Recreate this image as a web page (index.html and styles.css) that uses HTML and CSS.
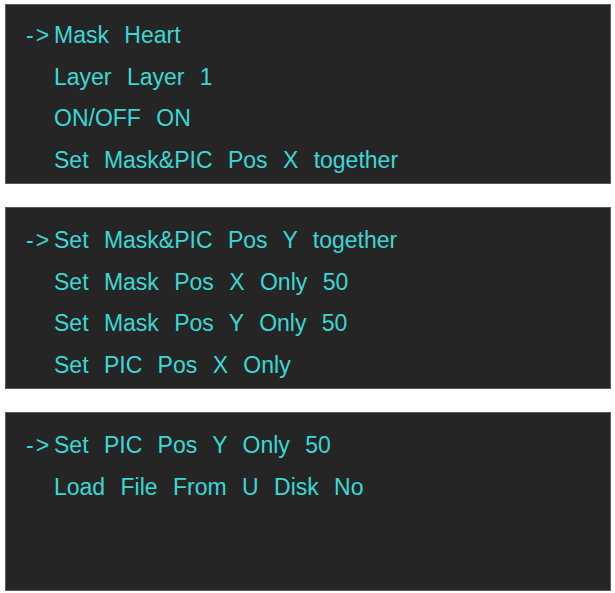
FILE: index.html
```html
<!DOCTYPE html>
<html lang="en">
<head>
  <meta charset="UTF-8">
  <title>Mask Menu</title>
  <link rel="stylesheet" href="styles.css">
</head>
<body>

  <!-- Menu page 1 -->
  <div class="screen">
    <p class="line"><span class="cursor">-&gt;</span>Mask  Heart</p>
    <p class="line indent">Layer  Layer  1</p>
    <p class="line indent">ON/OFF  ON</p>
    <p class="line indent">Set  Mask&amp;PIC  Pos  X  together</p>
  </div>

  <!-- Menu page 2 -->
  <div class="screen tall">
    <p class="line"><span class="cursor">-&gt;</span>Set  Mask&amp;PIC  Pos  Y  together</p>
    <p class="line indent">Set  Mask  Pos  X  Only  50</p>
    <p class="line indent">Set  Mask  Pos  Y  Only  50</p>
    <p class="line indent">Set  PIC  Pos  X  Only</p>
  </div>

  <!-- Menu page 3 -->
  <div class="screen last">
    <p class="line"><span class="cursor">-&gt;</span>Set  PIC  Pos  Y  Only  50</p>
    <p class="line indent">Load  File  From  U  Disk  No</p>
  </div>

</body>
</html>
```

FILE: styles.css
```css
body {
  margin: 0;
  padding: 4px 4px 0 5px;
  background-color: #fff;
  font-family: "Liberation Sans", Arial, sans-serif;
}

.screen {
  box-sizing: border-box;
  width: 606px;
  height: 180px;
  margin-bottom: 23px;
  padding: 10px 0 0 19px;
  background-color: #252525;
  border: 1px solid #5a5a5a;
}

.screen.tall {
  height: 182px;
  padding-top: 12px;
}

.screen.last {
  height: 179px;
  margin-bottom: 0;
  padding-top: 12px;
}

.line {
  margin: 0;
  height: 41.5px;
  line-height: 41.5px;
  font-size: 23px;
  word-spacing: 1.3px;
  white-space: pre;
  color: #3ad8d4;
}

.cursor {
  display: inline-block;
  width: 29px;
  padding-left: 1px;
  box-sizing: border-box;
  letter-spacing: 2px;
}

.indent {
  padding-left: 29px;
}
```
